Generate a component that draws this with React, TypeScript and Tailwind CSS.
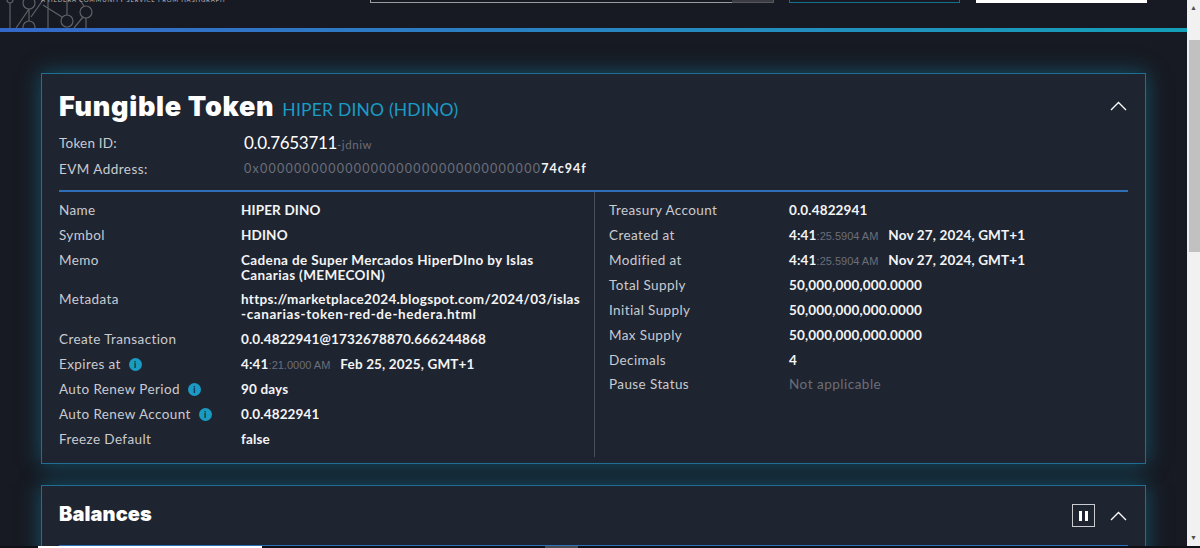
import React from 'react';

const labelFont = "font-['Lato',sans-serif]";

function InfoDot() {
  return (
    <span className="ml-2 inline-flex h-[13px] w-[13px] items-center justify-center rounded-full bg-[#1a9bc4] text-[9px] font-bold leading-none text-[#1e2431]">
      i
    </span>
  );
}

function Chevron() {
  return (
    <svg width="17" height="10" viewBox="0 0 17 10" fill="none" stroke="#ffffff" strokeWidth="1.3">
      <path d="M1 9 L8.5 1.5 L16 9" />
    </svg>
  );
}

function Time({ hm, rest, date }: { hm: string; rest: string; date: string }) {
  return (
    <span className="flex items-baseline">
      <span>{hm}</span>
      <span className="font-['Liberation_Sans',sans-serif] text-[11px] font-normal tracking-normal text-[#6b6f78]">{rest}</span>
      <span className="ml-[10px]">{date}</span>
    </span>
  );
}

function Row({ label, info, value, h = 'h-[25px]', labelWidth = 'w-[182px]' }: { label: string; info?: boolean; value: React.ReactNode; h?: string; labelWidth?: string }) {
  return (
    <div className={`flex items-start ${h}`}>
      <div className={`flex ${labelWidth} shrink-0 items-center text-[13.5px] leading-[20px] tracking-[0.4px] text-[#c9cbd0]`}>
        {label}
        {info && <InfoDot />}
      </div>
      <div className="text-[13.5px] font-bold leading-[20px] tracking-[0.15px] text-[#f4f4f5]">{value}</div>
    </div>
  );
}

export default function App() {
  return (
    <div className={`relative flex h-[548px] w-[1200px] overflow-hidden bg-[#171a22] ${labelFont}`}>
      <div className="w-[1187px] shrink-0 overflow-hidden">
        {/* top bar, scrolled mostly out of view */}
        <div className="relative h-[28px]">
          <svg className="absolute left-0 top-0" width="100" height="28" viewBox="0 0 100 28" fill="none" stroke="#5f6167" strokeWidth="1.2">
            <circle cx="10" cy="0" r="3" />
            <circle cx="29" cy="3" r="6" />
            <circle cx="29" cy="27" r="6" />
            <circle cx="67" cy="21" r="6" />
            <circle cx="86" cy="12" r="6" />
            <path d="M10 3 V28 M16 28 L29 9 M29 9 V21 M31 17 L43 0 M43 5 L62 17 M48 0 V28 M67 0 V15 M74 28 L83 17 M80 0 L84 6 M86 18 V28" />
          </svg>
          <div className="absolute left-[41px] top-[-5px] whitespace-nowrap text-[6px] leading-[10px] tracking-[0.82px] text-[#bdbfc4]">
            A HEDERA COMMUNITY SERVICE FROM HASHGRAPH
          </div>
          <div className="absolute left-[370px] top-0 flex h-[3px] w-[404px]">
            <div className="w-[362px] border-b border-l border-[#9a9ca0]" />
            <div className="flex-1 border-b border-r border-[#55575c] bg-[#3a3c42]" />
          </div>
          <div className="absolute left-[789px] top-0 h-[3px] w-[171px] border-x border-b border-[#14708c]" />
          <div className="absolute left-[976px] top-0 h-[3px] w-[171px] bg-white" />
        </div>
        <div className="h-[4px] bg-gradient-to-r from-[#3468c8] to-[#149fb8]" />

        <main className="px-[41px] pt-[41px]">
          <section className="h-[391px] border border-[#1f6f95] bg-[#1f2431] px-[17px] shadow-[0_0_20px_rgba(20,140,180,0.5)]">
            <div className="flex h-[51px] items-end justify-between">
              <div className="flex items-baseline">
                <h1 className="font-['Inter',sans-serif] text-[27px] font-black leading-[36px] tracking-[0.7px] text-white">Fungible Token</h1>
                <span className="ml-[8px] text-[17.5px] leading-[24px] tracking-[0.2px] text-[#1a9bc4]">HIPER DINO (HDINO)</span>
              </div>
              <div className="mb-[14px] mr-[1px]">
                <Chevron />
              </div>
            </div>
            <div className="mt-[5px] flex h-[26px] items-center">
              <div className="w-[185px] text-[13.5px] tracking-[0.2px] text-[#c9cbd0]">Token ID:</div>
              <div className="flex items-baseline">
                <span className="text-[17px] leading-[26px] tracking-[-0.35px] text-white">0.0.7653711</span>
                <span className="text-[11.5px] tracking-[0.6px] text-[#6b6f78]">-jdniw</span>
              </div>
            </div>
            <div className="flex h-[26px] items-center">
              <div className="w-[185px] text-[13.5px] tracking-[0.45px] text-[#c9cbd0]">EVM Address:</div>
              <div className="text-[12.5px] tracking-[1.27px] text-[#6b6f78]">
                0x000000000000000000000000000000000
                <span className="font-bold tracking-[1px] text-[#f4f4f5]">74c94f</span>
              </div>
            </div>
            <div className="mt-[8px] h-[2px] bg-[#2f6fb8]" />
            <div className="flex">
              <div className="h-[265px] w-[536px] shrink-0 border-r border-[#4a4e58] pt-[8px]">
                <Row label="Name" value="HIPER DINO" />
                <Row label="Symbol" value="HDINO" />
                <Row h="h-[39px]" label="Memo" value={<span className="block w-[300px] pt-[3px] leading-[15px] tracking-[0.37px]">Cadena de Super Mercados HiperDIno by Islas Canarias (MEMECOIN)</span>} />
                <Row
                  h="h-[40px]"
                  label="Metadata"
                  value={
                    <span className="block whitespace-nowrap pt-[3px] leading-[15px]">
                      <span className="tracking-[0.3px]">https://marketplace2024.blogspot.com/2024/03/islas</span>
                      <br />
                      <span className="tracking-[0.6px]">-canarias-token-red-de-hedera.html</span>
                    </span>
                  }
                />
                <Row label="Create Transaction" value="0.0.4822941@1732678870.666244868" />
                <Row label="Expires at" info value={<Time hm="4:41" rest=":21.0000 AM" date="Feb 25, 2025, GMT+1" />} />
                <Row label="Auto Renew Period" info value="90 days" />
                <Row label="Auto Renew Account" info value="0.0.4822941" />
                <Row label="Freeze Default" value="false" />
              </div>
              <div className="flex-1 pl-[14px] pt-[8px]">
                <Row labelWidth="w-[180px]" label="Treasury Account" value="0.0.4822941" />
                <Row labelWidth="w-[180px]" label="Created at" value={<Time hm="4:41" rest=":25.5904 AM" date="Nov 27, 2024, GMT+1" />} />
                <Row labelWidth="w-[180px]" label="Modified at" value={<Time hm="4:41" rest=":25.5904 AM" date="Nov 27, 2024, GMT+1" />} />
                <Row labelWidth="w-[180px]" label="Total Supply" value="50,000,000,000.0000" />
                <Row labelWidth="w-[180px]" label="Initial Supply" value="50,000,000,000.0000" />
                <Row labelWidth="w-[180px]" label="Max Supply" value="50,000,000,000.0000" />
                <Row h="h-[24px]" labelWidth="w-[180px]" label="Decimals" value="4" />
                <Row labelWidth="w-[180px]" label="Pause Status" value={<span className="font-normal tracking-[0.5px] text-[#6b6f78]">Not applicable</span>} />
              </div>
            </div>
          </section>

          <section className="mt-[21px] h-[100px] border border-[#1f6f95] bg-[#1f2431] px-[17px] shadow-[0_0_20px_rgba(20,140,180,0.5)]">
            <div className="flex h-[59px] items-center justify-between">
              <h2 className="mb-[3px] font-['Inter',sans-serif] text-[20px] font-black tracking-[0.1px] text-white">Balances</h2>
              <div className="mr-[1px] flex items-center gap-[15px]">
                <div className="flex h-[23px] w-[23px] items-center justify-center gap-[3px] border border-[#c9cbd0]">
                  <span className="h-[10px] w-[3px] bg-white" />
                  <span className="h-[10px] w-[3px] bg-white" />
                </div>
                <Chevron />
              </div>
            </div>
            <div className="h-px bg-[#2f6fb8]" />
          </section>
        </main>
      </div>

      {/* browser scrollbar */}
      <div className="flex w-[13px] flex-col bg-[#f1f1f1]">
        <div className="flex h-[15px] items-center justify-center text-[7px] text-[#505050]">▲</div>
        <div className="ml-[2px] mt-[25px] h-[212px] bg-[#c1c1c1]" />
        <div className="flex-1" />
        <div className="mb-[3px] flex h-[15px] items-center justify-center text-[7px] text-[#505050]">▼</div>
      </div>

      {/* remnant of a horizontal scrollbar along the bottom edge */}
      <div className="absolute bottom-0 left-0 h-[2px] w-full bg-[#0f1116]" />
      <div className="absolute bottom-0 left-[38px] h-[2px] w-[224px] bg-white" />
      <div className="absolute bottom-0 left-[545px] h-[2px] w-[33px] bg-[#4a4c52]" />
    </div>
  );
}
